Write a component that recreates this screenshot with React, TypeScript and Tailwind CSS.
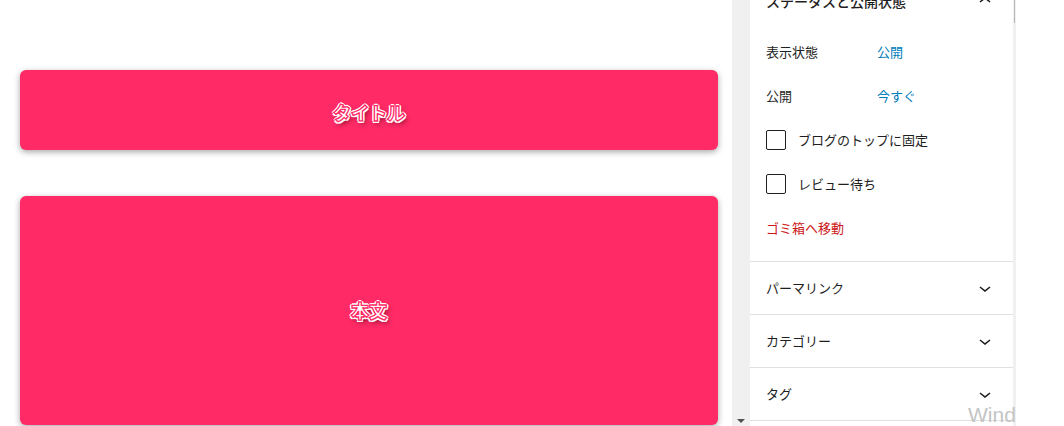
import React from "react";

const jp = "font-['Noto_Sans_CJK_JP','Noto_Sans',sans-serif]";

const outlined =
  "text-white font-black text-[18px] [-webkit-text-stroke:1.3px_#ff2a66] [text-shadow:2px_0_0_#fff,-2px_0_0_#fff,0_2px_0_#fff,0_-2px_0_#fff,1.5px_1.5px_0_#fff,-1.5px_-1.5px_0_#fff,1.5px_-1.5px_0_#fff,-1.5px_1.5px_0_#fff,2px_3px_5px_rgba(70,0,20,0.75)]";

function ChevronDown() {
  return (
    <svg viewBox="0 0 24 24" className="h-6 w-6 fill-[#1e1e1e]">
      <path d="M17.5 11.6L12 16l-5.5-4.4.9-1.2L12 14l4.5-3.6 1 1.2z" />
    </svg>
  );
}

function ChevronUp() {
  return (
    <svg viewBox="0 0 24 24" className="h-6 w-6 fill-[#1e1e1e]">
      <path d="M6.5 12.4L12 8l5.5 4.4-.9 1.2L12 10l-4.5 3.6-1-1.2z" />
    </svg>
  );
}

function Field({ label, value }: { label: string; value: string }) {
  return (
    <div className="flex h-[44px] items-center">
      <span className="w-[111px] text-[13px] text-[#1e1e1e]">{label}</span>
      <span className="text-[13px] text-[#007cba]">{value}</span>
    </div>
  );
}

function Check({ label }: { label: string }) {
  return (
    <div className="flex h-[44px] items-center gap-3">
      <span className="h-5 w-5 rounded-[2px] border-[1.5px] border-[#1e1e1e] bg-white" />
      <span className="text-[13px] text-[#1e1e1e]">{label}</span>
    </div>
  );
}

function Section({ title }: { title: string }) {
  return (
    <div className="flex h-[53px] items-center justify-between border-b border-[#e0e0e0] pl-4 pr-4">
      <span className="text-[13px] text-[#1e1e1e]">{title}</span>
      <ChevronDown />
    </div>
  );
}

export default function App() {
  return (
    <div className={`flex h-[426px] w-[1064px] overflow-hidden bg-white ${jp}`}>
      {/* editor canvas */}
      <div className="flex w-[732px] shrink-0 flex-col gap-[46px] pl-5 pr-[14px] pt-[70px]">
        <div className="flex h-[80px] items-center justify-center rounded-[6px] bg-[#ff2a66] pt-[5px] shadow-[0_2px_6px_rgba(0,0,0,0.35)]">
          <span className={outlined}>タイトル</span>
        </div>
        <div className="flex h-[229px] shrink-0 items-center justify-center rounded-[6px] bg-[#ff2a66] shadow-[0_2px_6px_rgba(0,0,0,0.35)]">
          <span className={outlined}>本文</span>
        </div>
      </div>

      {/* canvas scrollbar */}
      <div className="relative w-[18px] shrink-0 bg-[#f0f0f0]">
        <span className="absolute bottom-[3px] left-[5px] h-0 w-0 border-x-[4px] border-t-[4px] border-x-transparent border-t-[#505050]" />
      </div>

      {/* settings sidebar */}
      <div className="relative flex w-[266px] shrink-0 overflow-hidden">
        <div className="w-[263px] shrink-0">
          <div className="-mt-[23px]">
            <div className="flex h-[48px] items-center justify-between pl-4 pr-4">
              <span className="text-[14px] font-medium text-[#1e1e1e]">ステータスと公開状態</span>
              <ChevronUp />
            </div>
            <div className="px-4 pt-[5px]">
              <Field label="表示状態" value="公開" />
              <Field label="公開" value="今すぐ" />
              <Check label="ブログのトップに固定" />
              <Check label="レビュー待ち" />
              <div className="flex h-[44px] items-center">
                <span className="text-[13px] text-[#cc1818]">ゴミ箱へ移動</span>
              </div>
            </div>
            <div className="h-[12px] border-b border-[#e0e0e0]" />
            <Section title="パーマリンク" />
            <Section title="カテゴリー" />
            <Section title="タグ" />
          </div>
        </div>
        <div className="relative w-[3px] shrink-0 bg-[#f0f0f0]">
          <span className="absolute left-[1px] top-0 h-[23px] w-[1px] bg-[#b8b8b8]" />
        </div>
        <span className="pointer-events-none absolute left-[218px] top-[399px] whitespace-nowrap font-['Liberation_Sans',sans-serif] text-[21px] text-[#c4c4c4]">
          Windows のライセンス認証
        </span>
      </div>
    </div>
  );
}
